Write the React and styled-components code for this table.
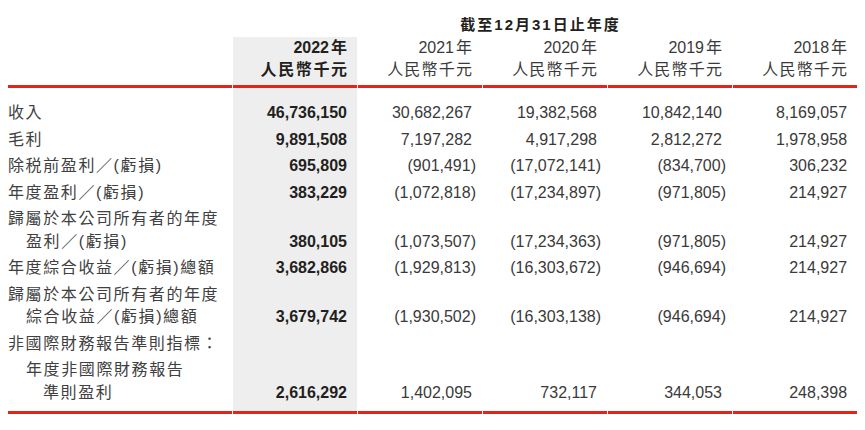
import React from "react";
import styled, { createGlobalStyle } from "styled-components";

const RED = "#e1251b";
const SHADE = "#eeeeee";

const Global = createGlobalStyle`
  html, body { margin: 0; padding: 0; background: #ffffff; }
  body {
    font-family: "Liberation Sans", "Noto Sans CJK TC", sans-serif;
    color: #333333;
  }
`;

const Page = styled.div`
  width: 865px;
  height: 430px;
  padding-left: 7px;
  box-sizing: border-box;
  overflow: hidden;
`;

const Table = styled.table`
  border-collapse: separate;
  border-spacing: 1px 0;
  table-layout: fixed;
  width: 851px;
  font-size: 16px;
`;

const LabelCol = styled.col`
  width: 224px;
`;
const NumCol = styled.col`
  width: 124px;
`;

const TitleCell = styled.th`
  padding: 14px 9px 1px 0;
  height: 22px;
  line-height: 22px;
  text-align: center;
  font-weight: 700;
  font-size: 15px;
  letter-spacing: 2px;
  color: #231f20;
`;

const HeadCell = styled.th`
  padding: 0 10px 4px 0;
  text-align: right;
  vertical-align: bottom;
  line-height: 22px;
  font-weight: ${(p) => (p.$bold ? 700 : 400)};
  color: ${(p) => (p.$bold ? "#231f20" : "#3a3a3a")};
  background: ${(p) => (p.$shade ? SHADE : "transparent")};
  border-bottom: 3px solid ${RED};
`;

const HeadLine = styled.div`
  white-space: nowrap;
`;

const Nian = styled.span`
  margin-left: 2px;
`;

const Unit = styled.span`
  letter-spacing: ${(p) => (p.$bold ? "1.6px" : "1.2px")};
  margin-right: ${(p) => (p.$bold ? "-1.6px" : "-1.2px")};
`;

const LabelCell = styled.td`
  padding: ${(p) => (p.$first ? "14px" : "2px")} 0 ${(p) => (p.$last ? "7px" : "2px")} 0;
  vertical-align: bottom;
  color: #404040;
  border-bottom: ${(p) => (p.$last ? `3px solid ${RED}` : "none")};
`;

const LabelLine = styled.div`
  line-height: 22.5px;
  white-space: nowrap;
  letter-spacing: 1.6px;
  padding-left: ${(p) => p.$indent || 0}px;
`;

const ValueCell = styled.td`
  padding: ${(p) => (p.$first ? "14px" : "2px")} 10px ${(p) => (p.$last ? "7px" : "2px")} 0;
  text-align: right;
  vertical-align: bottom;
  line-height: 22.5px;
  white-space: nowrap;
  font-weight: ${(p) => (p.$bold ? 700 : 400)};
  color: ${(p) => (p.$bold ? "#231f20" : "#3a3a3a")};
  background: ${(p) => (p.$shade ? SHADE : "transparent")};
  border-bottom: ${(p) => (p.$last ? `3px solid ${RED}` : "none")};
`;

const Paren = styled.span`
  margin-right: -4px;
`;

const years = ["2022", "2021", "2020", "2019", "2018"];

const rows = [
  { label: [["收入", 0]], v: ["46,736,150", "30,682,267", "19,382,568", "10,842,140", "8,169,057"] },
  { label: [["毛利", 0]], v: ["9,891,508", "7,197,282", "4,917,298", "2,812,272", "1,978,958"] },
  { label: [["除税前盈利／(虧損)", 0]], v: ["695,809", "(901,491)", "(17,072,141)", "(834,700)", "306,232"] },
  { label: [["年度盈利／(虧損)", 0]], v: ["383,229", "(1,072,818)", "(17,234,897)", "(971,805)", "214,927"] },
  {
    label: [["歸屬於本公司所有者的年度", 0], ["盈利／(虧損)", 18]],
    v: ["380,105", "(1,073,507)", "(17,234,363)", "(971,805)", "214,927"],
  },
  { label: [["年度綜合收益／(虧損)總額", 0]], v: ["3,682,866", "(1,929,813)", "(16,303,672)", "(946,694)", "214,927"] },
  {
    label: [["歸屬於本公司所有者的年度", 0], ["綜合收益／(虧損)總額", 18]],
    v: ["3,679,742", "(1,930,502)", "(16,303,138)", "(946,694)", "214,927"],
  },
  { label: [["非國際財務報告準則指標：", 0]], v: ["", "", "", "", ""] },
  {
    label: [["年度非國際財務報告", 18], ["準則盈利", 35]],
    v: ["2,616,292", "1,402,095", "732,117", "344,053", "248,398"],
  },
];

function Value({ text }) {
  if (text.startsWith("(") && text.endsWith(")")) {
    return (
      <>
        {text.slice(0, -1)}
        <Paren>)</Paren>
      </>
    );
  }
  return <>{text}</>;
}

export default function App() {
  return (
    <Page>
      <Global />
      <Table>
        <colgroup>
          <LabelCol />
          <NumCol />
          <NumCol />
          <NumCol />
          <NumCol />
          <NumCol />
        </colgroup>
        <thead>
          <tr>
            <th />
            <TitleCell colSpan={5}>截至12月31日止年度</TitleCell>
          </tr>
          <tr>
            <HeadCell as="td" />
            {years.map((y, i) => (
              <HeadCell key={y} $bold={i === 0} $shade={i === 0}>
                <HeadLine>
                  {y}
                  <Nian>年</Nian>
                </HeadLine>
                <HeadLine>
                  <Unit $bold={i === 0}>人民幣千元</Unit>
                </HeadLine>
              </HeadCell>
            ))}
          </tr>
        </thead>
        <tbody>
          {rows.map((r, ri) => {
            const first = ri === 0;
            const last = ri === rows.length - 1;
            return (
              <tr key={ri}>
                <LabelCell $first={first} $last={last}>
                  {r.label.map(([t, ind], li) => (
                    <LabelLine key={li} $indent={ind}>
                      {t}
                    </LabelLine>
                  ))}
                </LabelCell>
                {r.v.map((v, ci) => (
                  <ValueCell key={ci} $bold={ci === 0} $shade={ci === 0} $first={first} $last={last}>
                    <Value text={v} />
                  </ValueCell>
                ))}
              </tr>
            );
          })}
        </tbody>
      </Table>
    </Page>
  );
}
